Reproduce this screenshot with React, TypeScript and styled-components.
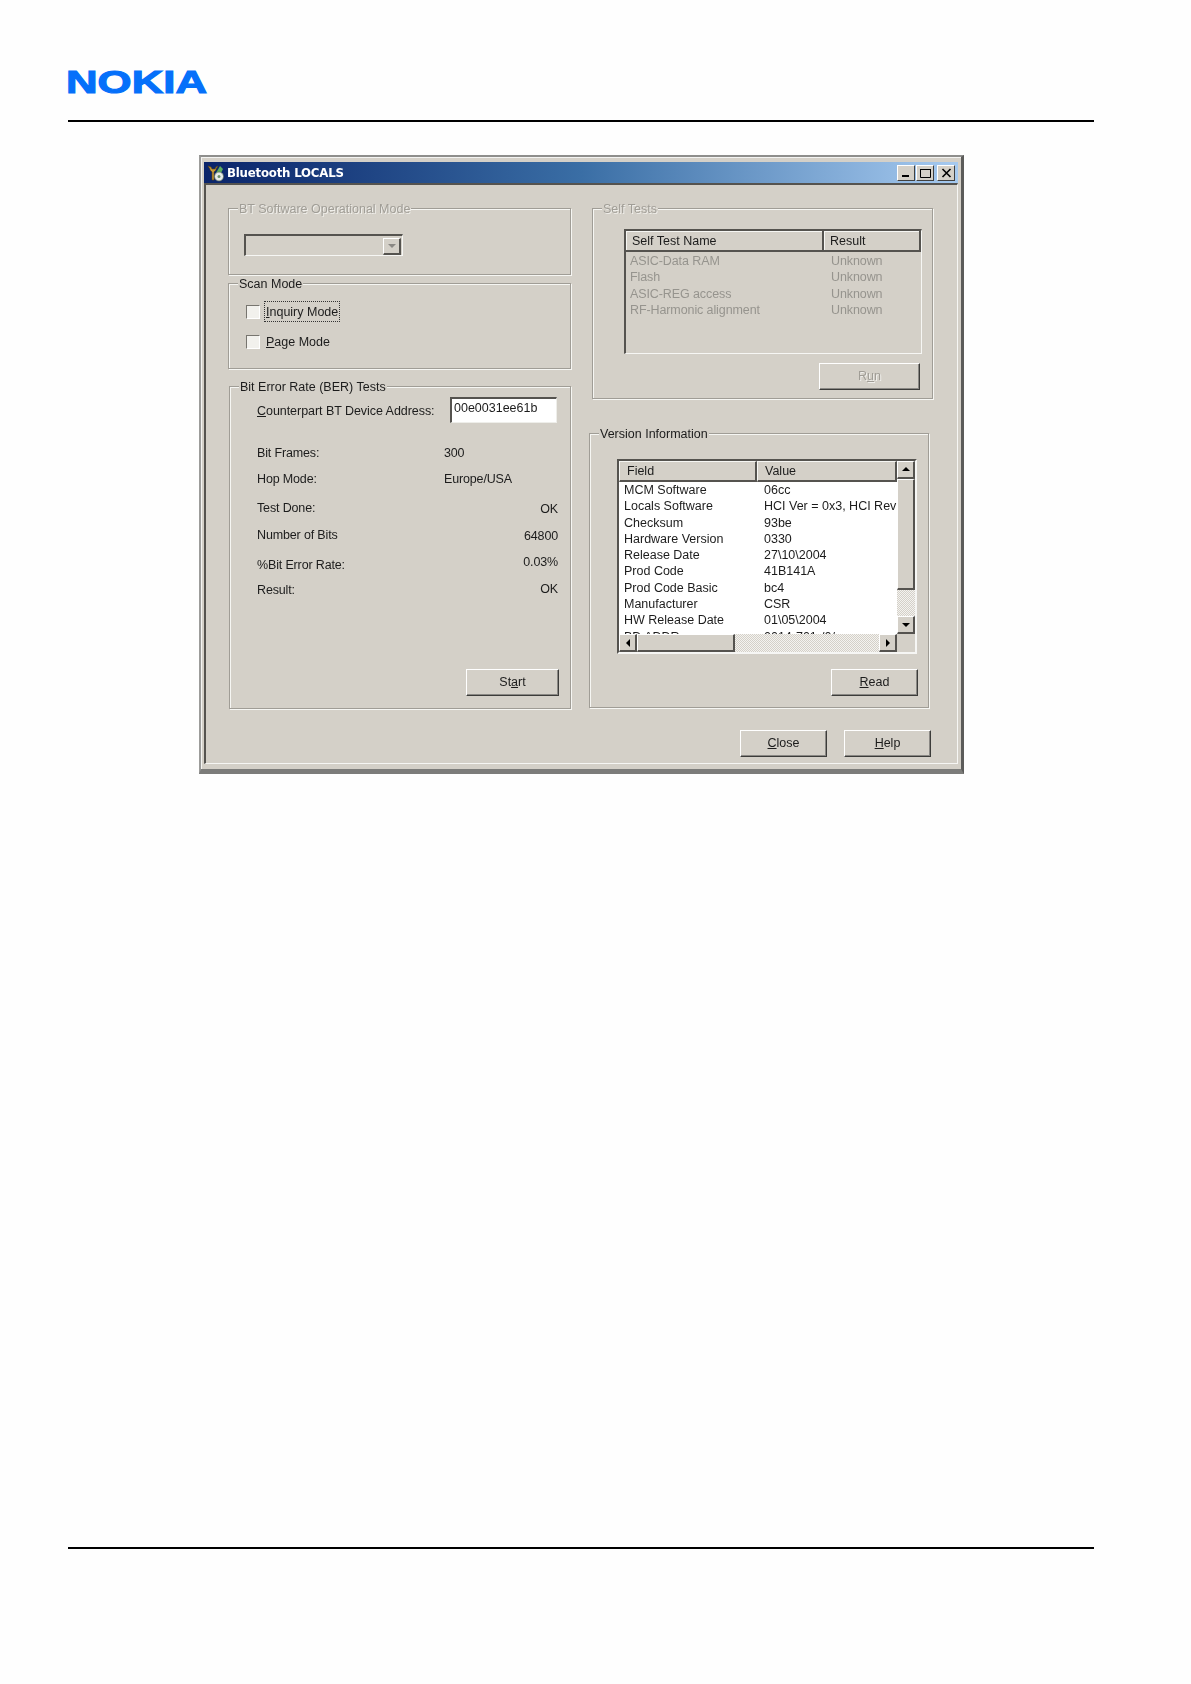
import React, { FunctionComponent } from 'react';
import styled, { createGlobalStyle } from 'styled-components';

const FACE = '#d4d0c8';
const SHADE = '#55534f';

const GlobalStyle = createGlobalStyle`
  * {
    box-sizing: border-box;
  }

  body {
    margin: 0;
    background: #fefefe;
    font-family: "Liberation Sans", Arial, sans-serif;
    font-size: 12.5px;
    color: #1c1c1c;
  }
`;

const Page = styled.div`
  height: 1684px;
  padding: 70px 97px 0 68px;
`;

const Logo = styled.svg`
  display: block;
  width: 138px;
  height: 23px;
  overflow: visible;
`;

const Rule = styled.div<{ $top: number }>`
  height: 2px;
  background: #000;
  margin-top: ${(p) => p.$top}px;
`;

// the source is a soft scan, hence the slight blur
const Window = styled.div`
  width: 765px;
  height: 619px;
  margin: 33px 0 0 131px;
  padding: 5px 3px 4px;
  background: ${FACE};
  border-top: 2px solid #8e8e8c;
  border-left: 2px solid #9c9c9a;
  border-right: 3px solid #5c5c5a;
  border-bottom: 5px solid #7c7c7a;
  box-shadow: inset 1px 1px 0 #f4f4f2;
  filter: blur(0.3px);
`;

const TitleBar = styled.div`
  display: flex;
  align-items: center;
  height: 21px;
  padding: 0 3px;
  background: linear-gradient(90deg, #0a246a 0%, #3a6ea5 50%, #a6caf0 100%);
`;

const TitleText = styled.span`
  flex: 1;
  margin-left: 2px;
  font-family: "DejaVu Sans", sans-serif;
  font-size: 11.75px;
  letter-spacing: -0.2px;
  font-weight: bold;
  color: #fff;
  white-space: nowrap;
`;

const CaptionButton = styled.div<{ $gap?: number }>`
  display: flex;
  align-items: center;
  justify-content: center;
  width: 18px;
  height: 16px;
  margin-left: ${(p) => p.$gap ?? 1}px;
  background: ${FACE};
  border-top: 1px solid #fff;
  border-left: 1px solid #fff;
  border-right: 1px solid #404040;
  border-bottom: 1px solid #404040;
`;

const Client = styled.div`
  height: 581px;
  padding: 0 26px 0 22px;
  border-top: 2px solid ${SHADE};
  border-left: 2px solid ${SHADE};
  border-right: 1px solid #f6f6f4;
  border-bottom: 1px solid #f6f6f4;
`;

const Columns = styled.div`
  display: grid;
  grid-template-columns: 343px 343px;
  column-gap: 18px;
  height: 524px;
`;

const Column = styled.div`
  display: flex;
  flex-direction: column;
  align-items: flex-start;
`;

const Group = styled.div<{ $h: number; $w: number; $ml?: number; $mt: number }>`
  position: relative;
  flex: none;
  display: flex;
  flex-direction: column;
  width: ${(p) => p.$w}px;
  height: ${(p) => p.$h}px;
  margin-left: ${(p) => p.$ml ?? 0}px;
  margin-top: ${(p) => p.$mt}px;
  border: 1px solid #a09d96;
  box-shadow: inset 1px 1px 0 #f6f6f3, 1px 1px 0 #f6f6f3;
`;

const Legend = styled.span<{ $disabled?: boolean }>`
  position: absolute;
  top: -7px;
  left: 9px;
  padding: 0 1px;
  background: ${FACE};
  white-space: nowrap;
  line-height: 15px;
  color: ${(p) => (p.$disabled ? '#a09d96' : '#1c1c1c')};
  text-shadow: ${(p) => (p.$disabled ? '1px 1px 0 #f0efeb' : 'none')};
`;

const Combo = styled.div`
  display: flex;
  justify-content: flex-end;
  width: 159px;
  height: 22px;
  margin: 25px 0 0 15px;
  padding: 2px 1px 0 0;
  border-top: 2px solid ${SHADE};
  border-left: 2px solid ${SHADE};
  border-right: 1px solid #f6f6f4;
  border-bottom: 1px solid #f6f6f4;
`;

const ComboButton = styled.div`
  display: flex;
  align-items: center;
  justify-content: center;
  width: 18px;
  height: 17px;
  background: ${FACE};
  border-top: 1px solid #fff;
  border-left: 1px solid #fff;
  border-right: 2px solid #55534f;
  border-bottom: 2px solid #55534f;
`;

const CheckList = styled.div`
  display: flex;
  flex-direction: column;
  gap: 11px;
  padding: 18px 0 0 17px;
`;

const CheckRow = styled.div`
  display: flex;
  align-items: center;
  gap: 5px;
  height: 19px;
`;

const CheckBox = styled.span`
  flex: none;
  width: 14px;
  height: 14px;
  background: #f2f1ed;
  border-top: 1px solid #77756f;
  border-left: 1px solid #77756f;
  border-right: 1px solid #fff;
  border-bottom: 1px solid #fff;
`;

const CheckLabel = styled.span<{ $focused?: boolean }>`
  padding: 2px 1px 0;
  line-height: 17px;
  outline: ${(p) => (p.$focused ? '1px dotted #333' : 'none')};
  outline-offset: 0;
`;

const AddressRow = styled.div`
  display: flex;
  align-items: center;
  height: 26px;
  margin-top: 10px;
  padding-left: 27px;
`;

const AddressLabel = styled.span`
  width: 193px;
  padding-top: 2px;
  letter-spacing: -0.05px;
  white-space: nowrap;
`;

const AddressInput = styled.input`
  width: 107px;
  height: 26px;
  padding: 0 0 6px 2px;
  font: inherit;
  color: #1c1c1c;
  background: #fff;
  border-top: 2px solid ${SHADE};
  border-left: 2px solid ${SHADE};
  border-right: 1px solid #eeeeea;
  border-bottom: 1px solid #eeeeea;
  outline: none;
`;

const StatRow = styled.div<{ $mt: number }>`
  display: grid;
  grid-template-columns: 187px 1fr;
  height: 16px;
  line-height: 16px;
  margin-top: ${(p) => p.$mt}px;
  padding: 0 12px 0 27px;
  letter-spacing: -0.15px;
`;

const StatValue = styled.span<{ $end?: boolean; $lift?: number }>`
  text-align: ${(p) => (p.$end ? 'right' : 'left')};
  margin-top: ${(p) => -(p.$lift ?? 0)}px;
`;

const Button = styled.div<{ $disabled?: boolean }>`
  display: flex;
  align-items: center;
  justify-content: center;
  flex: none;
  width: 87px;
  height: 27px;
  padding-bottom: 1px;
  background: ${FACE};
  border-top: 1px solid #fff;
  border-left: 1px solid #fff;
  border-right: 1px solid #3c3c3a;
  border-bottom: 1px solid #3c3c3a;
  box-shadow: inset -1px -1px 0 #8a8884;
  color: ${(p) => (p.$disabled ? '#a09d96' : '#1c1c1c')};
  text-shadow: ${(p) => (p.$disabled ? '1px 1px 0 #f0efeb' : 'none')};
`;

const StartButton = styled(Button)`
  width: 93px;
`;

const RunButton = styled(Button)`
  width: 101px;
`;

const ButtonEnd = styled.div<{ $right: number }>`
  display: flex;
  justify-content: flex-end;
  padding-right: ${(p) => p.$right}px;
`;

const StartBar = styled(ButtonEnd)`
  margin-top: auto;
  padding-bottom: 12px;
`;

const TestList = styled.div`
  width: 298px;
  height: 125px;
  margin: 20px 0 9px 31px;
  border-top: 2px solid ${SHADE};
  border-left: 2px solid ${SHADE};
  border-right: 1px solid #f6f6f4;
  border-bottom: 1px solid #f6f6f4;
`;

const TestHeader = styled.div`
  display: grid;
  grid-template-columns: 198px 1fr;
  height: 20px;
`;

const TestHeaderCell = styled.div`
  padding: 1px 0 0 6px;
  line-height: 18px;
  border-right: 2px solid ${SHADE};
  border-bottom: 2px solid ${SHADE};
  box-shadow: inset 1px 1px 0 #f6f6f3;
`;

const TestRow = styled.div`
  display: grid;
  grid-template-columns: 198px 1fr;
  height: 16.3px;
  line-height: 16.3px;
  padding-left: 4px;
  letter-spacing: -0.1px;
  color: #96948e;

  &:nth-of-type(2) {
    margin-top: 2px;
  }

  span:last-child {
    padding-left: 3px;
  }
`;

const VersionList = styled.div`
  display: grid;
  grid-template-columns: 1fr 18px;
  grid-template-rows: 1fr 18px;
  width: 300px;
  height: 195px;
  margin: 25px 0 15px 27px;
  border-top: 2px solid ${SHADE};
  border-left: 2px solid ${SHADE};
  border-right: 2px solid #f6f6f4;
  border-bottom: 2px solid #f6f6f4;
`;

const Viewport = styled.div`
  overflow: hidden;
  background: #fff;
`;

const VersionHeader = styled.div`
  display: grid;
  grid-template-columns: 138px 1fr;
  height: 20px;
  margin-bottom: 1px;
`;

const VersionHeaderCell = styled.div`
  padding-left: 7px;
  line-height: 18px;
  background: ${FACE};
  border-top: 1px solid #f6f6f3;
  border-left: 1px solid #f6f6f3;
  border-right: 2px solid ${SHADE};
  border-bottom: 2px solid ${SHADE};
`;

const VersionRow = styled.div`
  display: grid;
  grid-template-columns: 140px 1fr;
  height: 16.3px;
  line-height: 16.3px;
  padding-left: 5px;
  white-space: nowrap;
  overflow: hidden;
`;

const ScrollTrack = styled.div<{ $vertical?: boolean }>`
  display: flex;
  flex-direction: ${(p) => (p.$vertical ? 'column' : 'row')};
  background-color: #fff;
  background-image: repeating-conic-gradient(${FACE} 0 25%, #f4f3f0 0 50%);
  background-size: 2px 2px;
`;

const ScrollButton = styled.div`
  display: flex;
  align-items: center;
  justify-content: center;
  flex: none;
  width: 18px;
  height: 18px;
  background: ${FACE};
  border-top: 1px solid #fff;
  border-left: 1px solid #fff;
  border-right: 2px solid #55534f;
  border-bottom: 2px solid #55534f;
`;

const ScrollThumb = styled.div<{ $length: number; $vertical?: boolean }>`
  flex: none;
  width: ${(p) => (p.$vertical ? '18px' : `${p.$length}px`)};
  height: ${(p) => (p.$vertical ? `${p.$length}px` : '18px')};
  background: ${FACE};
  border-top: 1px solid #fff;
  border-left: 1px solid #fff;
  border-right: 2px solid #55534f;
  border-bottom: 2px solid #55534f;
`;

const ScrollSpacer = styled.div`
  flex: 1;
`;

const Corner = styled.div`
  background: ${FACE};
`;

const FooterBar = styled.div`
  display: flex;
  justify-content: flex-end;
  gap: 17px;
  margin-top: 21px;
`;

const Arrow: FunctionComponent<{ dir: 'up' | 'down' | 'left' | 'right'; color?: string }> = ({ dir, color = '#000' }) => {
  const points = {
    up: '0,5 4,1 8,5',
    down: '0,2 4,6 8,2',
    left: '6,0 2,4 6,8',
    right: '2,0 6,4 2,8',
  }[dir];
  return (
    <svg width="8" height="8" viewBox="0 0 8 8">
      <polygon points={points} fill={color} />
    </svg>
  );
};

const AppIcon = () => (
  <svg width="18" height="18" viewBox="0 0 18 18">
    <path d="M1 2l2 3v1l2 2v8h2V8l2-2V5l2-3-2 1-1 2H5L4 3z" fill="#c79a3a" stroke="#5b4310" strokeWidth="0.6" />
    <path d="M9 9l4-7 3 3-2 4z" fill="#5fae5f" />
    <circle cx="12" cy="12.5" r="4.5" fill="#e8ece8" stroke="#5a6a5a" strokeWidth="0.7" />
    <circle cx="12" cy="12.5" r="1.5" fill="#6a8f6a" />
  </svg>
);

const versionRows = [
  ['MCM Software', '06cc'],
  ['Locals Software', 'HCI Ver = 0x3, HCI Rev = 0x7'],
  ['Checksum', '93be'],
  ['Hardware Version', '0330'],
  ['Release Date', '27\\10\\2004'],
  ['Prod Code', '41B141A'],
  ['Prod Code Basic', 'bc4'],
  ['Manufacturer', 'CSR'],
  ['HW Release Date', '01\\05\\2004'],
  ['BD ADDR', '0014-701-/0/'],
];

const testRows = ['ASIC-Data RAM', 'Flash', 'ASIC-REG access', 'RF-Harmonic alignment'];

const App = () => (
  <Page>
    <GlobalStyle />
    <Logo viewBox="0 0 138 23">
      <text
        x="-2"
        y="23"
        fontFamily="Liberation Sans, Arial, sans-serif"
        fontWeight="bold"
        fontSize="32"
        fill="#0570fa"
        stroke="#0570fa"
        strokeWidth="1.1"
        textLength="141"
        lengthAdjust="spacingAndGlyphs"
      >
        NOKIA
      </text>
    </Logo>
    <Rule $top={27} />
    <Window>
      <TitleBar>
        <AppIcon />
        <TitleText>Bluetooth LOCALS</TitleText>
        <CaptionButton>
          <svg width="11" height="10" viewBox="0 0 11 10">
            <rect x="1" y="7" width="7" height="2" fill="#000" />
          </svg>
        </CaptionButton>
        <CaptionButton>
          <svg width="11" height="10" viewBox="0 0 11 10">
            <path d="M0.5 1.5h10v8h-10z" fill="none" stroke="#000" />
            <path d="M0 1.5h11" stroke="#000" />
          </svg>
        </CaptionButton>
        <CaptionButton $gap={3}>
          <svg width="11" height="10" viewBox="0 0 11 10">
            <path d="M1.5 1l8 8M9.5 1l-8 8" stroke="#000" strokeWidth="1.6" />
          </svg>
        </CaptionButton>
      </TitleBar>
      <Client>
        <Columns>
          <Column>
            <Group $w={343} $h={67} $mt={23}>
              <Legend $disabled>BT Software Operational Mode</Legend>
              <Combo>
                <ComboButton>
                  <Arrow dir="down" color="#8a8884" />
                </ComboButton>
              </Combo>
            </Group>
            <Group $w={343} $h={86} $mt={8}>
              <Legend>Scan Mode</Legend>
              <CheckList>
                <CheckRow>
                  <CheckBox />
                  <CheckLabel $focused>
                    <u>I</u>nquiry Mode
                  </CheckLabel>
                </CheckRow>
                <CheckRow>
                  <CheckBox />
                  <CheckLabel>
                    <u>P</u>age Mode
                  </CheckLabel>
                </CheckRow>
              </CheckList>
            </Group>
            <Group $w={342} $h={323} $ml={1} $mt={17}>
              <Legend>Bit Error Rate (BER) Tests</Legend>
              <AddressRow>
                <AddressLabel>
                  <u>C</u>ounterpart BT Device Address:
                </AddressLabel>
                <AddressInput readOnly value="00e0031ee61b" />
              </AddressRow>
              <StatRow $mt={22}>
                <span>Bit Frames:</span>
                <StatValue>300</StatValue>
              </StatRow>
              <StatRow $mt={10}>
                <span>Hop Mode:</span>
                <StatValue>Europe/USA</StatValue>
              </StatRow>
              <StatRow $mt={13}>
                <span>Test Done:</span>
                <StatValue $end $lift={-1}>OK</StatValue>
              </StatRow>
              <StatRow $mt={11}>
                <span>Number of Bits</span>
                <StatValue $end $lift={-1}>64800</StatValue>
              </StatRow>
              <StatRow $mt={14}>
                <span>%Bit Error Rate:</span>
                <StatValue $end $lift={3}>0.03%</StatValue>
              </StatRow>
              <StatRow $mt={9}>
                <span>Result:</span>
                <StatValue $end $lift={1}>OK</StatValue>
              </StatRow>
              <StartBar $right={11}>
                <StartButton>
                  <span>
                    St<u>a</u>rt
                  </span>
                </StartButton>
              </StartBar>
            </Group>
          </Column>
          <Column>
            <Group $w={341} $h={191} $ml={3} $mt={23}>
              <Legend $disabled>Self Tests</Legend>
              <TestList>
                <TestHeader>
                  <TestHeaderCell>Self Test Name</TestHeaderCell>
                  <TestHeaderCell>Result</TestHeaderCell>
                </TestHeader>
                {testRows.map((name) => (
                  <TestRow key={name}>
                    <span>{name}</span>
                    <span>Unknown</span>
                  </TestRow>
                ))}
              </TestList>
              <ButtonEnd $right={12}>
                <RunButton $disabled>
                  <span>
                    R<u>u</u>n
                  </span>
                </RunButton>
              </ButtonEnd>
            </Group>
            <Group $w={340} $h={275} $mt={34}>
              <Legend>Version Information</Legend>
              <VersionList>
                <Viewport>
                  <VersionHeader>
                    <VersionHeaderCell>Field</VersionHeaderCell>
                    <VersionHeaderCell>Value</VersionHeaderCell>
                  </VersionHeader>
                  {versionRows.map(([field, value]) => (
                    <VersionRow key={field}>
                      <span>{field}</span>
                      <span>{value}</span>
                    </VersionRow>
                  ))}
                </Viewport>
                <ScrollTrack $vertical>
                  <ScrollButton>
                    <Arrow dir="up" />
                  </ScrollButton>
                  <ScrollThumb $vertical $length={111} />
                  <ScrollSpacer />
                  <ScrollButton>
                    <Arrow dir="down" />
                  </ScrollButton>
                </ScrollTrack>
                <ScrollTrack>
                  <ScrollButton>
                    <Arrow dir="left" />
                  </ScrollButton>
                  <ScrollThumb $length={98} />
                  <ScrollSpacer />
                  <ScrollButton>
                    <Arrow dir="right" />
                  </ScrollButton>
                </ScrollTrack>
                <Corner />
              </VersionList>
              <ButtonEnd $right={10}>
                <Button>
                  <span>
                    <u>R</u>ead
                  </span>
                </Button>
              </ButtonEnd>
            </Group>
          </Column>
        </Columns>
        <FooterBar>
          <Button>
            <span>
              <u>C</u>lose
            </span>
          </Button>
          <Button>
            <span>
              <u>H</u>elp
            </span>
          </Button>
        </FooterBar>
      </Client>
    </Window>
    <Rule $top={773} />
  </Page>
);

export default App;
